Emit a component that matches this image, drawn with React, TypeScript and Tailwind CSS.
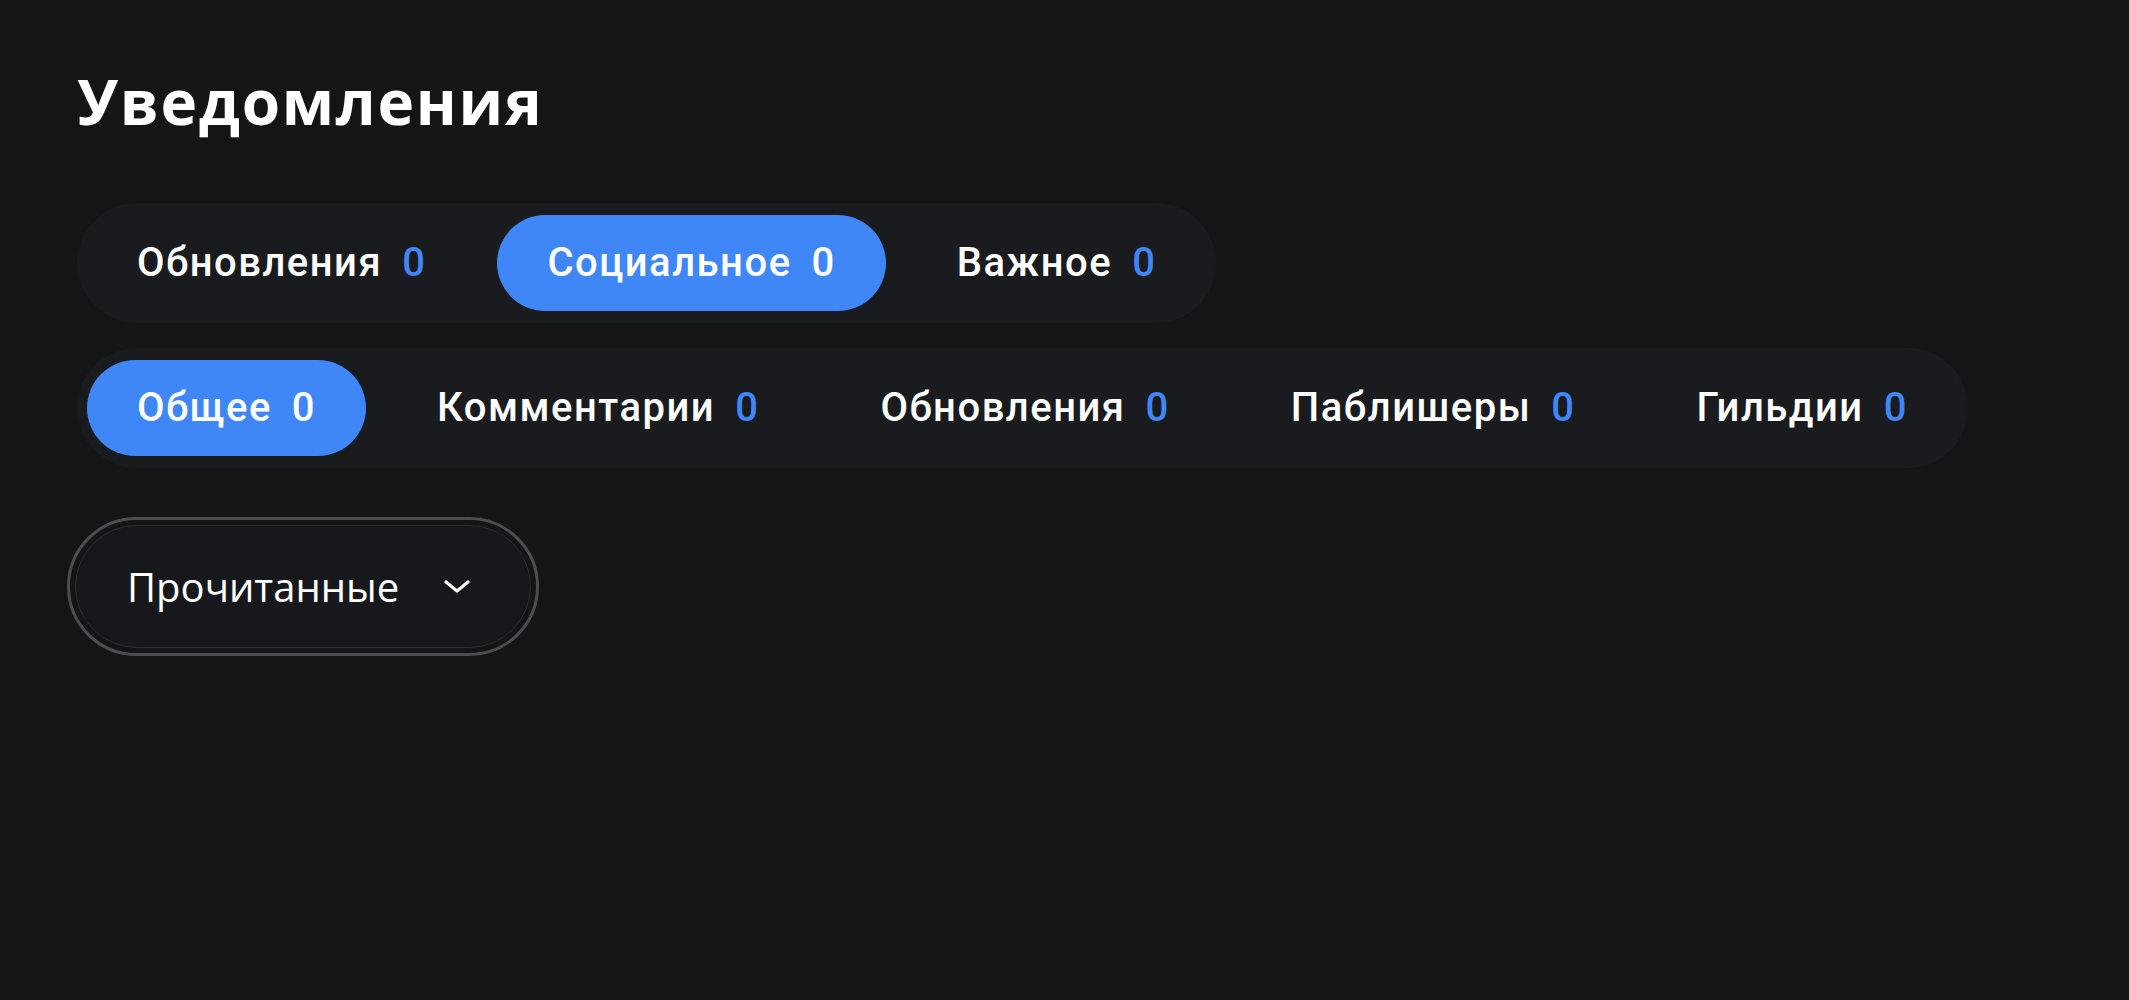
import React from 'react';

type Tab = { label: string; count: number };

const KINDS: Tab[] = [
  { label: 'Обновления', count: 0 },
  { label: 'Социальное', count: 0 },
  { label: 'Важное', count: 0 },
];

const SOURCES: Tab[] = [
  { label: 'Общее', count: 0 },
  { label: 'Комментарии', count: 0 },
  { label: 'Обновления', count: 0 },
  { label: 'Паблишеры', count: 0 },
  { label: 'Гильдии', count: 0 },
];

const TabBar: React.FC<{ tabs: Tab[]; active: number }> = ({ tabs, active }) => (
  <div className="flex w-fit items-center gap-[21px] rounded-full bg-[#1a1b1e] px-[10px] py-3">
    {tabs.map((tab, idx) => {
      const on = idx === active;
      return (
        <button
          key={idx}
          className={`flex h-[96px] items-center gap-[20px] rounded-full px-[50px] text-[40px] font-medium tracking-[1.5px] text-white ${
            on ? 'bg-[#3f86f6]' : 'bg-transparent'
          }`}
        >
          <span>{tab.label}</span>
          <span className={on ? 'text-white' : 'text-[#3f86f6]'}>{tab.count}</span>
        </button>
      );
    })}
  </div>
);

export default function App() {
  return (
    <div className="min-h-screen bg-[#141517] pl-[77px] pt-[70px] font-['Roboto',sans-serif]">
      <h1 className="font-['Open_Sans',sans-serif] text-[62px] font-bold leading-none tracking-[1.7px] text-white">
        Уведомления
      </h1>

      <div className="mt-[71px] flex flex-col gap-[25px]">
        <TabBar tabs={KINDS} active={1} />
        <TabBar tabs={SOURCES} active={0} />
      </div>

      {/* read filter */}
      <div className="-ml-[10px] mt-[49px] w-fit rounded-full border-[3px] border-[#4b4d53] p-[5px]">
        <button className="flex h-[123px] w-[456px] items-center gap-[44px] rounded-full border border-[#2c2e33] bg-[#17181b] pl-[51px] font-['Open_Sans',sans-serif] text-[40px] text-white">
          <span>Прочитанные</span>
          <svg width="28" height="18" viewBox="0 0 28 18" fill="none" stroke="white" strokeWidth="3.2" strokeLinecap="round" strokeLinejoin="round">
            <path d="M3 4l11 9 11-9" />
          </svg>
        </button>
      </div>
    </div>
  );
}
